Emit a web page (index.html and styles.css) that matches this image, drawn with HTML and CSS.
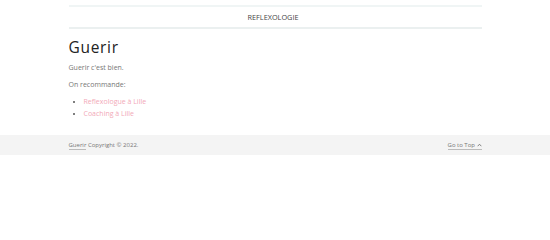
FILE: index.html
```html
<!DOCTYPE html>
<html lang="fr">
<head>
  <meta charset="UTF-8" />
  <title>Guerir</title>
  <link rel="stylesheet" href="styles.css">
</head>
<body>
  <div class="container">
    <header class="site-header">
      <nav class="nav">
        <a href="#" class="nav-link">Reflexologie</a>
      </nav>
    </header>

    <main class="content">
      <h1 class="title">Guerir</h1>
      <p>Guerir c'est bien.</p>
      <p>On recommande:</p>
      <ul class="links">
        <li><a href="#">Reflexologue à Lille</a></li>
        <li><a href="#">Coaching à Lille</a></li>
      </ul>
    </main>
  </div>

  <footer class="footer">
    <div class="container footer-inner">
      <span><a href="#" class="footer-link">Guerir</a> Copyright © 2022.</span>
      <a href="#" class="footer-link">Go to Top
        <svg class="caret" width="5" height="4" viewBox="0 0 5 4"><path d="M0.7 3.2 L2.5 1.2 L4.3 3.2" fill="none" stroke="#777" stroke-width="0.9"/></svg>
      </a>
    </div>
  </footer>
</body>
</html>
```

FILE: styles.css
```css
body {
  font-family: "Open Sans", Arial, sans-serif;
  margin: 0;
  background: #fff;
  color: #777;
  font-size: 7px;
}

.container {
  width: 413px;
  margin: 0 auto;
}

.site-header {
  margin-top: 5px;
  border-top: 2px solid #f0f5f5;
  border-bottom: 2px solid #ebf0f0;
}

.nav {
  display: flex;
  justify-content: center;
  height: 20px;
  align-items: center;
}

.nav-link {
  color: #444;
  text-decoration: none;
  text-transform: uppercase;
  font-size: 7.3px;
  margin-right: 4px;
}

.content {
  padding-top: 10px;
  padding-bottom: 15px;
}

.title {
  font-size: 15.5px;
  line-height: 16px;
  font-weight: 400;
  color: #222;
  margin: 0 0 8px;
  letter-spacing: 0.7px;
}

.content p {
  margin: 0 0 8px;
  line-height: 9px;
}

.content p + p {
  margin-bottom: 7px;
}

.links {
  margin: 0;
  padding-left: 15px;
}

.links li {
  line-height: 12px;
  color: #555;
}

.links a {
  color: #f2a9b8;
  text-decoration: none;
}

.footer {
  background: #f4f4f4;
}

.footer-inner {
  display: flex;
  justify-content: space-between;
  align-items: center;
  height: 20px;
  font-size: 6px;
}

.footer-link {
  color: #777;
  text-decoration: none;
  border-bottom: 1px solid #bbb;
}

.caret {
  vertical-align: 0;
}
```
